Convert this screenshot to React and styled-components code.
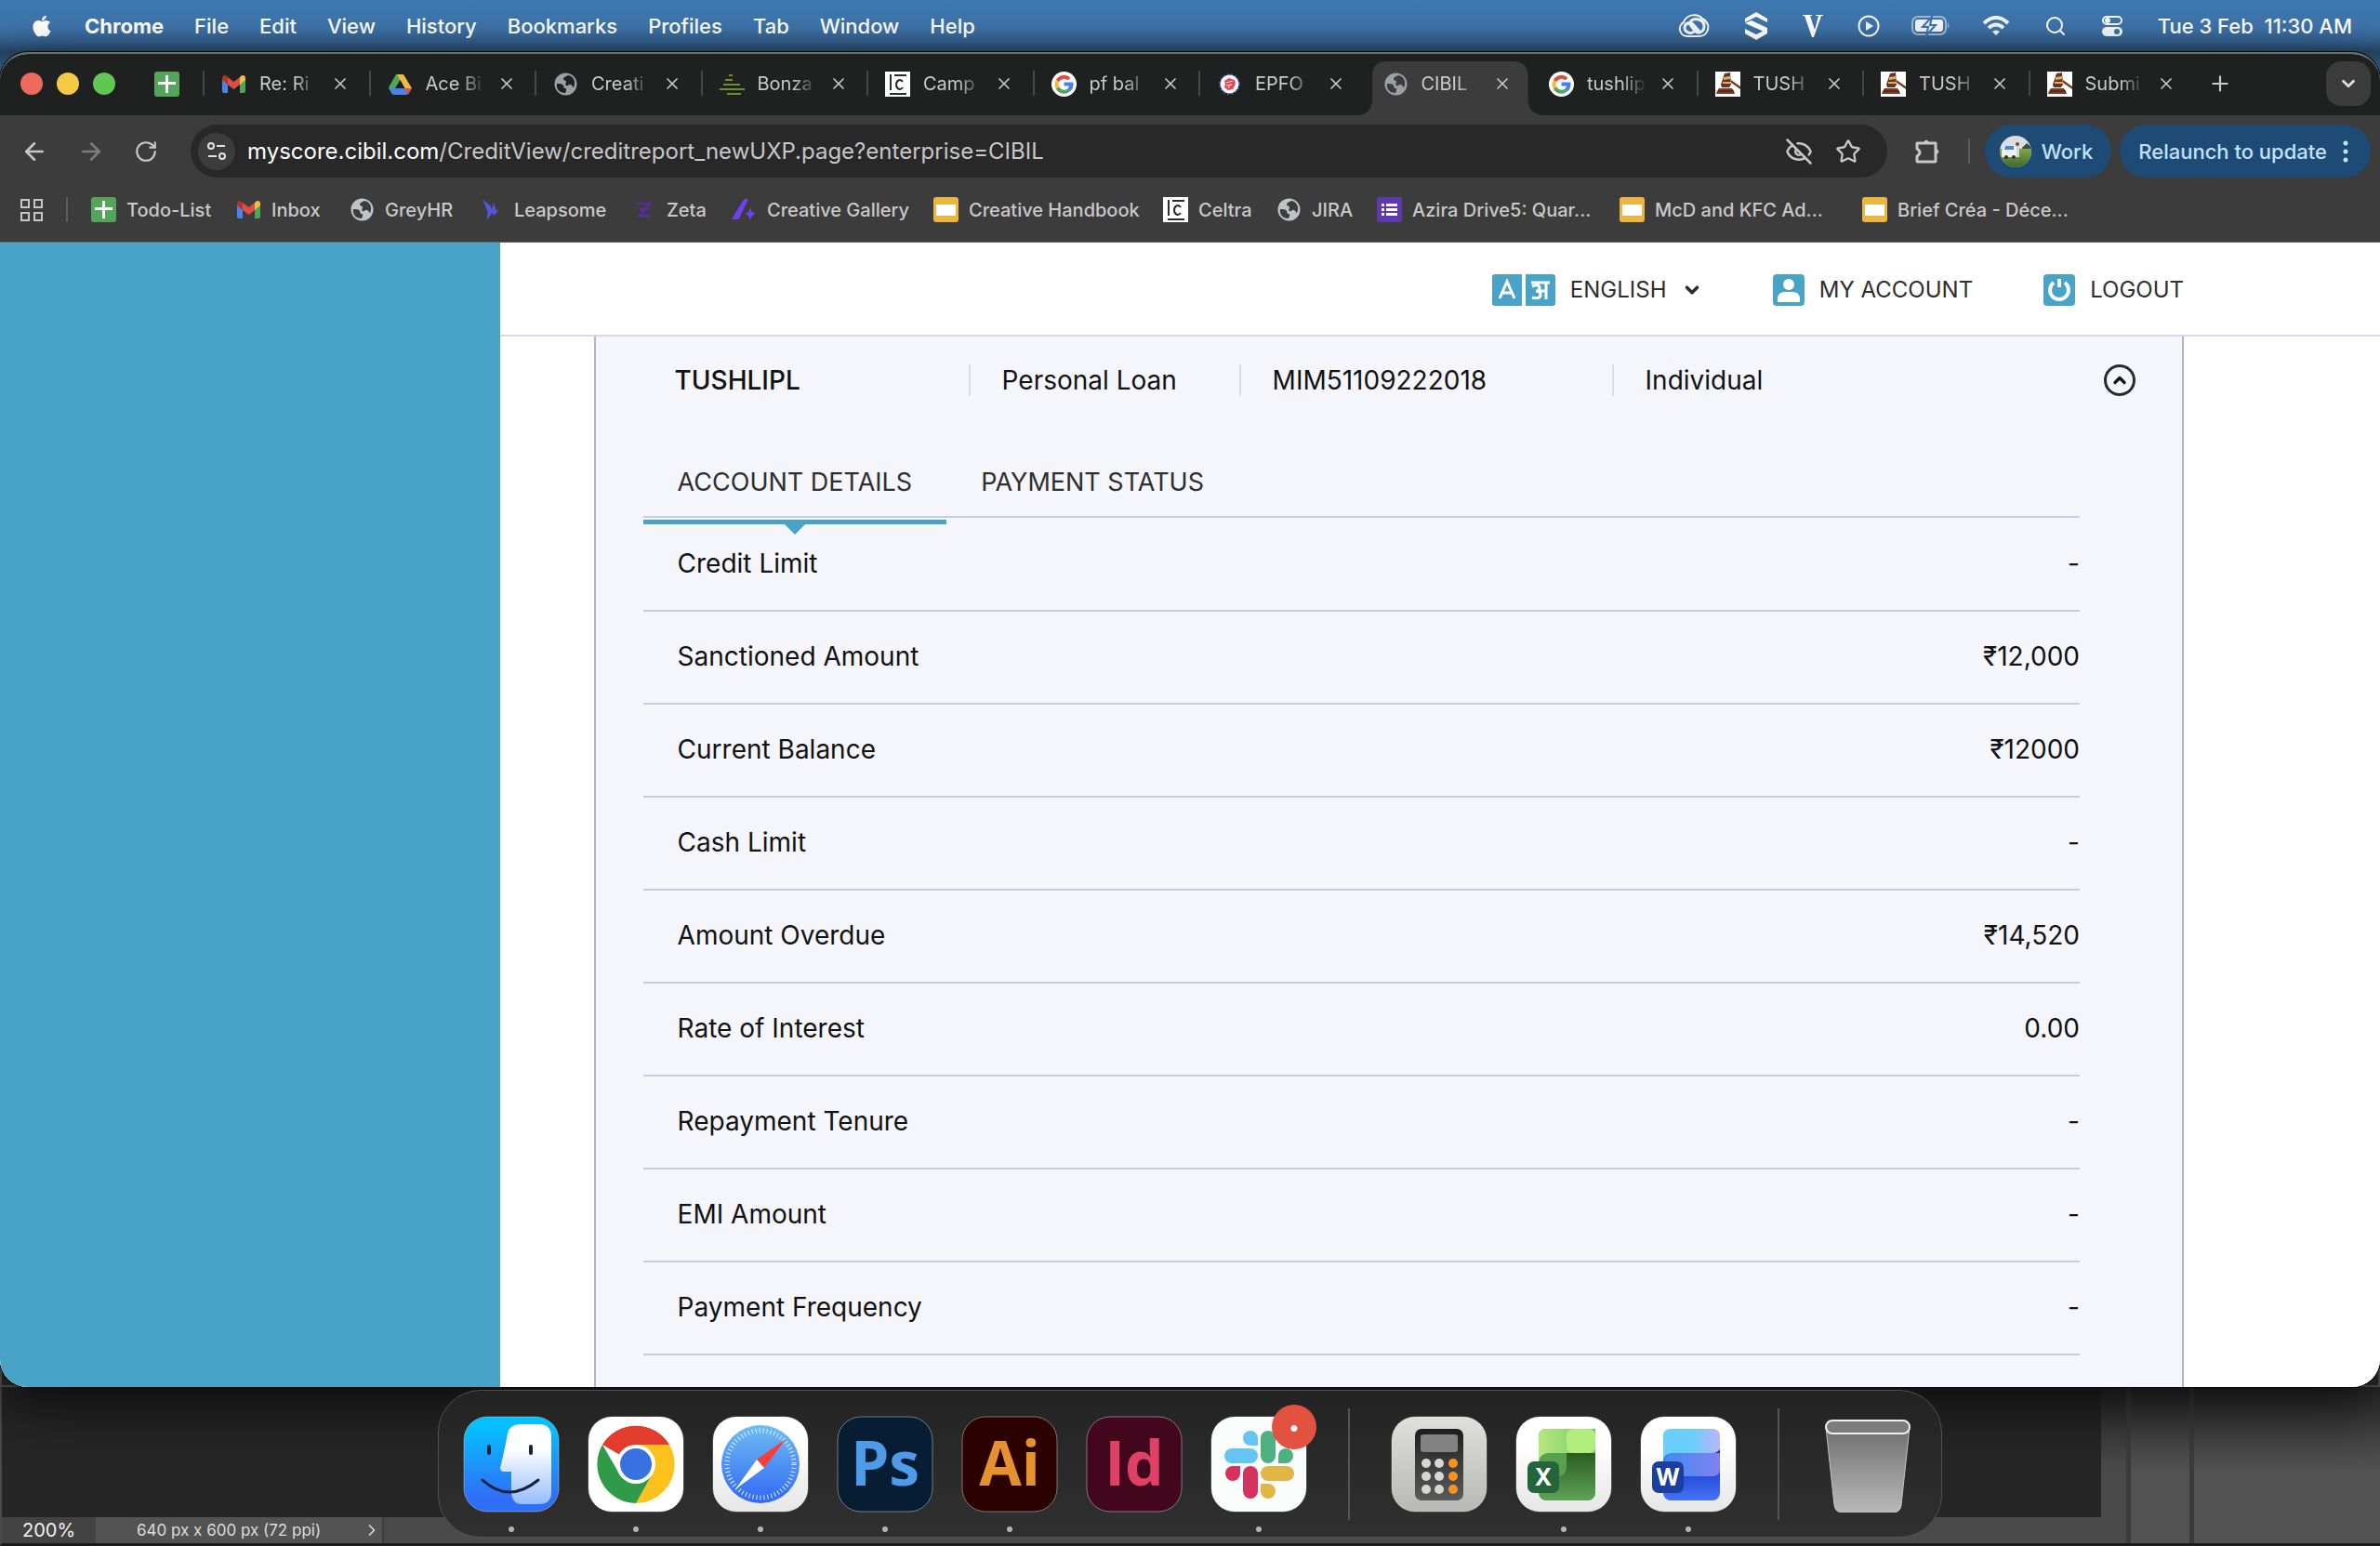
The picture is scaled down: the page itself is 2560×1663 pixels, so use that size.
import React from 'react'
import styled, { createGlobalStyle, css } from 'styled-components'
import { FaApple } from 'react-icons/fa'
import {
  ArrowLeft, ArrowRight, RotateCw, EyeOff, Star, Plus, X, ChevronDown, ChevronRight, ChevronUp, Search
} from 'lucide-react'

const GlobalStyle = createGlobalStyle`
* { box-sizing: border-box; }
body {
  margin: 0;
  background: #262626;
  font-family: Inter, "Noto Sans", sans-serif;
}
button, select {
  margin: 0;
  padding: 0;
  border: 0;
  background: none;
  color: inherit;
  font: inherit;
}
a { color: inherit; text-decoration: none; }
svg { display: block; flex: none; }
`

const Desktop = styled.div`
position: relative;
display: flex;
flex-direction: column;
min-height: 100vh;
overflow: hidden;
background: linear-gradient(#3f79b1 0, #3d73a9 30px, #33608c 44px, #264766 56px, #3b6c9c 80px);
`

/* menu bar */
const MenuBar = styled.header`
display: flex;
align-items: center;
justify-content: space-between;
height: 56px;
padding: 0 30px 0 32px;
color: #fff;
font-size: 22px;
font-weight: 500;
`
const MenuGroup = styled.nav`
display: flex;
align-items: center;
gap: 33px;
`
const MenuItem = styled.button`
font-weight: ${p => (p.$bold ? 700 : 500)};
`
const StatusGroup = styled.div`
display: flex;
align-items: center;
gap: 37px;
`
const Clock = styled.time`
white-space: pre;
`

/* browser window */
const WindowStack = styled.div`
position: relative;
&::before {
  content: "";
  position: absolute;
  inset: 6px 0 0;
  border: 2px solid #5a5a5a;
  border-radius: 26px 26px 0 0;
  background: #2c2c2c;
}
`
const BrowserWindow = styled.main`
position: relative;
overflow: hidden;
border-top: 2px solid #6c7070;
border-radius: 30px;
background: #fff;
box-shadow: 0 0 0 1px #0a0a0a, 0 20px 60px rgba(0, 0, 0, 0.7);
`
const TabStrip = styled.div`
display: flex;
height: 66px;
background: #1f2120;
`
const StripStart = styled.div`
display: flex;
align-items: center;
width: 218px;
padding: 0 0 2px 22px;
gap: 15px;
`
const Light = styled.button`
width: 24px;
height: 24px;
border-radius: 50%;
background: ${p => p.$color};
`
const PinnedTab = styled.button`
margin-left: 27px;
`
const Tabs = styled.div`
flex: 1;
display: grid;
grid-template-columns: repeat(12, 1fr);
`
const TabItem = styled.div`
position: relative;
display: flex;
align-items: center;
gap: 14px;
padding: 0 0 2px 20px;
color: #c9cbca;
font-size: 20px;

${p => !p.$active && css`
  &::before {
    content: "";
    position: absolute;
    left: 0;
    top: 18px;
    width: 2px;
    height: 27px;
    background: ${p.$noLine ? 'transparent' : '#464847'};
  }
`}
`
const ActiveShape = styled.svg`
position: absolute;
left: -10px;
bottom: 0;
width: calc(100% + 26px);
height: 58px;
`
const TabTitle = styled.span`
position: relative;
width: 66px;
white-space: nowrap;
mask-image: linear-gradient(90deg, #000 38px, transparent 64px);
`
const TabIcon = styled.span`
position: relative;
`
const CloseTab = styled.button`
position: relative;
margin-left: -3px;
`
const StripEnd = styled.div`
display: flex;
align-items: center;
justify-content: space-between;
width: 200px;
padding: 0 10px 2px 15px;
color: #c9cbca;
`
const TabSearch = styled.button`
display: grid;
place-items: center;
width: 48px;
height: 48px;
border-radius: 16px;
background: #3c3c3c;
color: #e0e0e0;
`
const Toolbar = styled.div`
display: flex;
align-items: center;
height: 77px;
padding: 0 10px 0 22px;
background: #3c3c3c;
color: #c7c7c7;
`
const NavButton = styled.button`
width: 30px;
margin-right: 31px;
color: ${p => (p.$off ? '#7c7c7c' : '#c7c7c7')};
`
const Omnibox = styled.div`
flex: 1;
display: flex;
align-items: center;
height: 57px;
padding: 0 28px 0 8px;
border-radius: 29px;
background: #282828;
font-size: 24px;
`
const SiteInfo = styled.button`
display: grid;
place-items: center;
width: 40px;
height: 40px;
margin-right: 13px;
border-radius: 50%;
background: #3c3c3c;
`
const Url = styled.span`
flex: 1;
b {
  font-weight: 400;
  color: #fff;
}
`
const OmniActions = styled.div`
display: flex;
gap: 24px;
`
const Extensions = styled.button`
margin: 0 30px 0 29px;
`
const Divider = styled.span`
width: 2px;
height: 27px;
background: #5d5d5d;
`
const Pill = styled.button`
display: flex;
align-items: center;
gap: ${p => (p.$first ? '11px' : '17px')};
height: 57px;
margin-left: ${p => (p.$first ? '16px' : '9px')};
padding: 0 ${p => (p.$first ? '20px 0 16px' : '24px 0 20px')};
border-radius: 29px;
background: #1e4a76;
color: #c2e2fc;
font-size: 22px;
font-weight: 500;
white-space: nowrap;
`
const BookmarkBar = styled.nav`
display: flex;
align-items: center;
height: 60px;
padding: 0 22px 10px;
border-bottom: 1px solid #6a6a6a;
background: #3c3c3c;
color: #c9c9c9;
font-size: 20px;
font-weight: 500;
`
const BookmarkDivider = styled(Divider)`
margin: 0 25px 0 25px;
`
const Bookmark = styled.a`
flex: none;
display: flex;
align-items: center;
gap: 11px;
width: ${p => p.$width}px;
white-space: nowrap;
`

/* web page */
const Page = styled.div`
display: grid;
grid-template-columns: 21% 1fr;
background: #fff;
color: #111;
`
const Sidebar = styled.aside`
background: #49a3c7;
`
const SiteHeader = styled.div`
display: flex;
justify-content: flex-end;
align-items: center;
gap: 76px;
height: 101px;
padding: 2px 211px 0 0;
border-bottom: 2px solid #cfdaf2;
color: #2e2e2e;
font-size: 24px;
`
const HeaderAction = styled.button`
display: flex;
align-items: center;
gap: 16px;
`
const Language = styled.label`
display: flex;
align-items: center;
gap: 16px;
select {
  appearance: none;
}
`
const Card = styled.section`
margin: 0 211px 0 101px;
padding: 0 110px 34px 51px;
border: solid #b4b6ba;
border-width: 0 2px;
background: #f5f6fc;
font-size: 28px;
`
const Summary = styled.div`
display: grid;
grid-template-columns: 316px 291px 401px 1fr 34px;
align-items: center;
height: 94px;
margin-right: -60px;
padding-left: 34px;
`
const SummaryCell = styled.span`
${p => p.$strong && css`
  font-weight: 500;
`}
${p => p.$line && css`
  padding-left: 34px;
  border-left: 2px solid #dcdde2;
`}
`
const Collapse = styled.button`
display: grid;
place-items: center;
width: 34px;
height: 34px;
border: 3px solid #2a2a2a;
border-radius: 50%;
`
const DetailTabs = styled.div`
display: flex;
height: 101px;
padding-top: 26px;
border-bottom: 2px solid #c3cee2;
`
const DetailTab = styled.button`
position: relative;
padding: 0 37px;
color: #2e2e2e;
font-size: 27px;

${p => p.$active && css`
  &::before {
    content: "";
    position: absolute;
    left: 0;
    right: 0;
    bottom: -9px;
    height: 5px;
    background: #49a3c7;
  }
  &::after {
    content: "";
    position: absolute;
    left: calc(50% - 12px);
    bottom: -20px;
    border: solid transparent;
    border-width: 12px 12px 0;
    border-top-color: #49a3c7;
  }
`}
`
const Details = styled.table`
width: 100%;
border-collapse: collapse;
`
const DetailRow = styled.tr`
height: 100px;
border-bottom: 2px solid #c3cee2;
`
const Label = styled.th`
padding: 0 0 2px 37px;
font-weight: 400;
text-align: left;
`
const Value = styled.td`
padding: 0 0 2px;
text-align: right;
`

/* editor window left showing at the bottom */
const Editor = styled.footer`
flex: 1;
display: grid;
grid-template-columns: 1fr 32px 68px 200px;
min-height: 171px;
border-left: 2px solid #4a4a4a;
border-bottom: 3px solid #1b1b1b;
background: #262626;
`
const Canvas = styled.div`
display: flex;
align-items: flex-end;
`
const StatusBar = styled.div`
flex: 1;
display: flex;
height: 28px;
background: #4a4a4a;
color: #dcdcdc;
font-size: 17px;
line-height: 29px;
`
const Zoom = styled.span`
width: 101px;
padding-left: 22px;
background: #434343;
color: #f2f2f2;
font-size: 20px;
`
const DocSize = styled.button`
display: flex;
align-items: center;
justify-content: space-between;
width: 310px;
padding: 0 1px 0 44px;
border-right: 2px solid #3e3e3e;
background: #535353;
`
const Gutter = styled.div`
border-right: ${p => (p.$edge ? '5px solid #3b3b3b' : '0')};
background: linear-gradient(#2b2b2b, ${p => p.$color} 90px);
`
const Dock = styled.nav`
position: absolute;
left: 50%;
bottom: 9px;
transform: translateX(-50%);
display: flex;
align-items: center;
gap: 30px;
height: 159px;
padding: 0 26px;
border: 1px solid #505050;
border-radius: 46px;
background: linear-gradient(#232323, #303030);
`
const DockApp = styled.button`
position: relative;
width: 104px;
height: 104px;
&::after {
  content: "";
  position: absolute;
  left: 49px;
  bottom: -21px;
  width: 6px;
  height: 6px;
  border-radius: 50%;
  background: ${p => (p.$running ? '#b4b4b4' : 'transparent')};
}
`
const DockLine = styled.span`
width: 2px;
height: 120px;
margin: 0 14px;
background: #555;
`
const Badge = styled.span`
position: absolute;
right: -10px;
top: -12px;
display: grid;
place-items: center;
width: 48px;
height: 48px;
border-radius: 50%;
background: #e15241;
color: #fff;
font-size: 22px;
`

const SheetIcon = () => (
  <svg width="27" height="27" viewBox="0 0 27 27">
    <rect width="27" height="27" rx="3" fill="#54a45a" />
    <path d="M12 4h3v7h8v3h-8v9h-3v-9H4v-3h8z" fill="#fff" />
  </svg>
)
const GmailIcon = () => (
  <svg width="27" height="27" viewBox="0 0 27 27">
    <path d="M1 7v14q0 2 2 2h4V11z" fill="#4b83ee" />
    <path d="M26 7v14q0 2-2 2h-4V11z" fill="#4aa65a" />
    <path d="M20 6v8l6-5V7c0-3-3-4-5-2z" fill="#f2bd42" />
    <path d="M1 7v2l6 5V6L6 5C4 3 1 4 1 7z" fill="#b5332a" />
    <path d="M7 6v8l6.5 5 6.5-5V6l-6.5 5z" fill="#dd4f43" />
  </svg>
)
const DriveIcon = () => (
  <svg width="27" height="27" viewBox="0 0 27 27">
    <path d="M9 3h5l-1 7-8 13-4-6z" fill="#4ea65a" />
    <path d="M10 3h7l9 15h-8z" fill="#f1b93e" />
    <path d="M1 18h25l-3 5q-1 2-3 2H7q-2 0-3-2z" fill="#4c82ea" />
    <path d="M18 18h8l-4 6z" fill="#dd5144" />
    <path d="M13.5 9l5 9h-10z" fill="#1f2120" />
  </svg>
)
const GlobeIcon = ({ color = '#bfc3c8', hole = '#3c3c3c' }) => (
  <svg width="27" height="27" viewBox="0 0 27 27">
    <circle cx="13.5" cy="13.5" r="12" fill={color} />
    <path d="M4 13c3 0 6 0 7 2s0 3 2 3 1 3 0 5C7 23 3 19 4 13zM16 4c-2 1-5 2-5 4s3 1 3 3-2 3 0 4 3-2 5-1 2 3 3 3c3-6 0-12-6-13z" fill={hole} />
  </svg>
)
const BonzaIcon = () => (
  <svg width="27" height="27" viewBox="0 0 27 27" fill="#6b8f2a">
    <rect x="10" y="3" width="4" height="2" /><rect x="6" y="8" width="8" height="2" />
    <rect x="4" y="13" width="18" height="2" /><rect x="0" y="18" width="27" height="2" />
    <rect x="8" y="23" width="15" height="2" />
  </svg>
)
const CeltraIcon = () => (
  <svg width="27" height="27" viewBox="0 0 27 27" fill="none" stroke="#2b2b2b" strokeWidth="2">
    <rect width="27" height="27" fill="#fff" stroke="none" />
    <path d="M6 3v17M10 4h13M5 24h18M19 11c-3-4-7-1-7 3s4 7 7 3" />
  </svg>
)
const GoogleIcon = () => (
  <svg width="27" height="27" viewBox="0 0 27 27" fill="none" strokeWidth="4">
    <circle cx="13.5" cy="13.5" r="13.5" fill="#fff" />
    <path d="M6.5 10a8 8 0 0 1 12.5-2" stroke="#e24a3c" />
    <path d="M6.5 10a8 8 0 0 0 0 7.5" stroke="#f2bb3f" />
    <path d="M6.5 17.500a8 8 0 0 0 12 2.500" stroke="#4fa65b" />
    <path d="M13.5 13.5h8a8 8 0 0 1-3 6.500" stroke="#4680ea" />
  </svg>
)
const EpfoIcon = () => (
  <svg width="27" height="27" viewBox="0 0 27 27">
    <circle cx="13.5" cy="13.5" r="10" fill="none" stroke="#3b4fae" strokeWidth="3" strokeDasharray="2 2" />
    <circle cx="13.5" cy="13.5" r="10" fill="#f4f4fb" />
    <path d="M8 10l5-3 6 2 1 4-3 6-5 1-4-3 1-4z" fill="#dc4a50" />
    <path d="M10 12l7-2M10 15l6-1M12 18l3-5" fill="none" stroke="#f8d9da" />
  </svg>
)
const GavelIcon = () => (
  <svg width="27" height="27" viewBox="0 0 27 27">
    <rect width="27" height="27" fill="#fff" />
    <path d="M10 2l6-1 1 13-2 3H7l-1-3z" fill="#6a3420" />
    <path d="M9 6l7-1v3l-7 1zM8 11h9v2H8z" fill="#d5b169" />
    <path d="M17 9l10 7v3l-10-7z" fill="#7a3b22" />
    <path d="M4 18h14l2 3 1 3H1l1-3z" fill="#7d3c22" />
    <path d="M3 21h17" stroke="#3c1a0e" strokeWidth="1" />
  </svg>
)
const LeapsomeIcon = () => (
  <svg width="27" height="27" viewBox="0 0 27 27">
    <path d="M4 2l9 8 2 6-2 3-5 6 2-8zM14 14l2-8 3 9 3-1-6 6z" fill="#5356d6" />
  </svg>
)
const ZetaIcon = () => (
  <svg width="27" height="27" viewBox="0 0 27 27">
    <path d="M6 7h14L9 20h12M9 13.5h9" fill="none" stroke="#55308f" strokeWidth="3" />
  </svg>
)
const GalleryIcon = () => (
  <svg width="27" height="27" viewBox="0 0 27 27" fill="#7140f5">
    <path d="M12 4q1-2 3-2h3l-9 19q-1 3-4 3H0zM20 11q1 6 6 7-5 1-6 7-1-6-6-7 5-1 6-7z" />
  </svg>
)
const SlidesIcon = () => (
  <svg width="27" height="27" viewBox="0 0 27 27">
    <rect width="27" height="27" rx="3" fill="#ebb540" />
    <rect x="3" y="8" width="21" height="12" fill="#fff" />
  </svg>
)
const FormsIcon = () => (
  <svg width="27" height="27" viewBox="0 0 27 27">
    <rect width="27" height="27" rx="2" fill="#5f38b0" />
    <path d="M5 7h3v3H5zM10 7h12v3H10zM5 12h3v3H5zM10 12h12v3H10zM5 17h3v3H5zM10 17h12v3H10z" fill="#fff" />
  </svg>
)

const CloudIcon = () => (
  <svg width="34" height="26" viewBox="0 0 34 26" fill="none" stroke="#f3f6fa" strokeWidth="3">
    <path d="M10 24a8 8 0 0 1-4-15C9 0 21-1 26 5c6 3 8 9 5 14q-2 5-9 5z" strokeWidth="2" />
    <path d="M17 19c-3 3-10 1-10-4s6-7 9-4l7 8M13 8c5-5 15-2 15 5s-7 9-10 5l-6-8" />
  </svg>
)
const StackIcon = () => (
  <svg width="26" height="30" viewBox="0 0 26 30" fill="#fff">
    <path d="M1 11V7l12-7 12 7v4L13 5z" />
    <path d="M1 12l7-3 17 8v6l-6-3z" />
    <path d="M1 18l12 6 12-6v5l-12 7-12-7z" />
  </svg>
)
const VIcon = () => (
  <svg width="22" height="24" viewBox="0 0 22 24" fill="#fff">
    <path d="M0 0h10v1H8l5 15 4-15h-3V0h8v1h-2l-8 23h-2L2 1H0z" />
  </svg>
)
const PlayIcon = () => (
  <svg width="24" height="24" viewBox="0 0 24 24">
    <circle cx="12" cy="12" r="10.5" fill="none" stroke="#f3f6fa" strokeWidth="2" />
    <path d="M9 7l8 5-8 5z" fill="#f3f6fa" />
  </svg>
)
const BatteryIcon = () => (
  <svg width="36" height="22" viewBox="3 0 36 22" overflow="visible">
    <rect x="1" y="1" width="36" height="19" rx="6" fill="none" stroke="#9fbbd6" strokeWidth="2" />
    <rect x="4" y="4" width="30" height="13" rx="3" fill="#f3f6fa" />
    <path d="M39 7q3 3 0 7z" fill="#9fbbd6" />
    <path d="M22 1l-10 11h6l-2 9 10-11h-6z" fill="#f3f6fa" stroke="#3d73a9" strokeWidth="2" />
  </svg>
)
const WifiIcon = () => (
  <svg width="30" height="22" viewBox="0 0 30 22" fill="none" stroke="#f3f6fa" strokeWidth="4">
    <path d="M2 8q13-12 26 0M7 13q8-7 16 0" />
    <path d="M15 21l-4-4q4-3 8 0z" fill="#f3f6fa" stroke="none" />
  </svg>
)
const ControlIcon = () => (
  <svg width="24" height="24" viewBox="0 0 24 24">
    <rect x="2" y="2" width="20" height="8" rx="4" fill="none" stroke="#f3f6fa" strokeWidth="2" />
    <circle cx="7" cy="6" r="3" fill="#f3f6fa" />
    <rect x="1" y="13" width="22" height="10" rx="5" fill="#f3f6fa" />
    <circle cx="17" cy="18" r="3" fill="#3d6f9f" />
  </svg>
)
const TuneIcon = () => (
  <svg width="22" height="22" viewBox="0 0 22 22" fill="none" stroke="#e3e3e3" strokeWidth="2">
    <circle cx="5" cy="5" r="3" /><path d="M11 5h9M2 16h9" /><circle cx="17" cy="16" r="3" />
  </svg>
)
const PuzzleIcon = () => (
  <svg width="28" height="28" viewBox="0 0 28 28" fill="none" stroke="#c7c7c7" strokeWidth="3">
    <path d="M3 5h20v19q0 1-1 1H4q-1 0-1-1v-5q6-4 0-8z" strokeLinejoin="round" />
    <path d="M10 4q3-5 6 0zM24 11q5 3 0 6z" fill="#c7c7c7" stroke="none" />
  </svg>
)
const AppsIcon = () => (
  <svg width="24" height="24" viewBox="0 0 24 24" fill="none" stroke="#c7c7c7" strokeWidth="2">
    <path d="M1 1h8v8H1zM15 1h8v8h-8zM1 15h8v8H1zM15 15h8v8h-8z" />
  </svg>
)
const Avatar = () => (
  <svg width="34" height="34" viewBox="0 0 34 34">
    <defs>
      <clipPath id="face"><circle cx="17" cy="17" r="17" /></clipPath>
      <linearGradient id="grass" x2="0" y2="1"><stop stopColor="#7fa848" /><stop offset="1" stopColor="#41662a" /></linearGradient>
    </defs>
    <g clipPath="url(#face)">
      <rect width="34" height="34" fill="#d8dee3" />
      <path d="M24 13l5-5 5 4v4H24z" fill="#3f5238" />
      <rect y="14" width="34" height="20" fill="url(#grass)" />
      <path d="M4 11h13l4 4v8H2v-7z" fill="#edf1f4" />
      <path d="M6 11h9v4H5z" fill="#4289cf" />
      <circle cx="7" cy="23" r="2" fill="#333" /><circle cx="15" cy="23" r="2" fill="#333" />
      <path d="M18 10h3v13h-3z" fill="#d9d4d0" />
      <circle cx="19" cy="9" r="2" fill="#6b4a3a" />
    </g>
  </svg>
)
const MoreIcon = () => (
  <svg width="6" height="24" viewBox="0 0 6 24" fill="#c2e2fc">
    <circle cx="3" cy="3" r="2.5" /><circle cx="3" cy="12" r="2.5" /><circle cx="3" cy="21" r="2.5" />
  </svg>
)
const LanguageIcon = () => (
  <svg width="68" height="34" viewBox="0 0 68 34">
    <path d="M3 0h29v34H3q-3 0-3-3V3q0-3 3-3zM36 0h29q3 0 3 3v28q0 3-3 3H36z" fill="#49a3c7" />
    <path d="M8 26l8-18 8 18M11 20h10M42 9h20M58 9v18M43 13q8-3 8 2 0 3-4 3 5 0 5 4 0 5-9 3M52 18h6" fill="none" stroke="#fff" strokeWidth="3" />
  </svg>
)
const UserIcon = () => (
  <svg width="34" height="34" viewBox="0 0 34 34">
    <rect width="34" height="34" rx="4" fill="#49a3c7" />
    <circle cx="17" cy="11" r="6" fill="#fff" />
    <path d="M5 30v-3q0-8 8-8h8q8 0 8 8v3z" fill="#fff" />
  </svg>
)
const PowerIcon = () => (
  <svg width="34" height="34" viewBox="0 0 34 34">
    <rect width="34" height="34" rx="4" fill="#49a3c7" />
    <path d="M11 9a10 10 0 1 0 12 0M17 5v9" fill="none" stroke="#fff" strokeWidth="4" />
  </svg>
)

const Tile = ({ fill, children, rim = '#ffffff55' }) => (
  <svg width="104" height="104" viewBox="0 0 104 104">
    <defs>
      <linearGradient id="finder" x2="0" y2="1"><stop offset="0.1" stopColor="#05c0ff" /><stop offset="0.85" stopColor="#2f6ff6" /></linearGradient>
      <linearGradient id="finderFace" x2="0" y2="1"><stop offset="0.3" stopColor="#fff" /><stop offset="1" stopColor="#94bdfb" /></linearGradient>
      <linearGradient id="white" x2="0" y2="1"><stop offset="0.3" stopColor="#fff" /><stop offset="1" stopColor="#e6e6e6" /></linearGradient>
      <linearGradient id="compass" x2="0" y2="1"><stop stopColor="#6fbdf2" /><stop offset="1" stopColor="#3168f3" /></linearGradient>
      <linearGradient id="calc" x2="0" y2="1"><stop stopColor="#dfdfdd" /><stop offset="1" stopColor="#b8b8b4" /></linearGradient>
      <linearGradient id="calcBody" x2="0" y2="1"><stop stopColor="#1e1e1e" /><stop offset="1" stopColor="#5a5a5a" /></linearGradient>
      <linearGradient id="xlDark" x2="0" y2="1"><stop offset="0.3" stopColor="#28591f" /><stop offset="1" stopColor="#5fa257" /></linearGradient>
      <linearGradient id="xlLight"><stop stopColor="#b5e77c" /><stop offset="1" stopColor="#72c968" /></linearGradient>
      <linearGradient id="wdTop"><stop offset="0.5" stopColor="#69cefb" /><stop offset="1" stopColor="#bdb4fa" /></linearGradient>
      <linearGradient id="wdMid"><stop stopColor="#3f8cf0" /><stop offset="1" stopColor="#8080f0" /></linearGradient>
      <linearGradient id="wdLow" x2="0" y2="1"><stop offset="0.2" stopColor="#0b2fc6" /><stop offset="1" stopColor="#4573f6" /></linearGradient>
    </defs>
    <rect x="1" y="1" width="102" height="102" rx="25" fill={fill} stroke={rim} strokeWidth="1" />
    {children}
  </svg>
)
const FinderApp = () => (
  <Tile fill="url(#finder)">
    <path d="M62 9h20q13 0 13 14v59q0 13-13 13H63q-10 0-11-13V60h-8q-4 0-4-4 5-20 8-37 2-10 14-10z" fill="url(#finderFace)" />
    <path d="M28 33v7M73 33v7" stroke="#17233c" strokeWidth="4" strokeLinecap="round" />
    <path d="M21 69q28 26 60 0" fill="none" stroke="#17233c" strokeWidth="3" strokeLinecap="round" />
  </Tile>
)
const ChromeApp = () => (
  <Tile fill="#fff">
    <path d="M52 52L16 31A42 42 0 0 1 88 31z" fill="#e33b2e" />
    <path d="M52 31h36A42 42 0 0 1 52 94l18-32z" fill="#fcc21b" />
    <path d="M16 31l18 31 18 11 18-11-18 32A42 42 0 0 1 16 31z" fill="#2f9a48" />
    <circle cx="52" cy="52" r="21" fill="#fff" />
    <circle cx="52" cy="52" r="17" fill="#3871e0" />
  </Tile>
)
const SafariApp = () => (
  <Tile fill="url(#white)">
    <circle cx="52" cy="52" r="42" fill="url(#compass)" />
    <circle cx="52" cy="52" r="36" fill="none" stroke="#e4f1ff" strokeWidth="5" strokeDasharray="1 3" />
    <path d="M79 25L48 47l8 9z" fill="#fb3d3a" />
    <path d="M25 79l23-32 8 9z" fill="#fff" />
  </Tile>
)
const AdobeText = styled.text`
font-family: "Open Sans", "Noto Sans", sans-serif;
font-size: 66px;
font-weight: 700;
text-anchor: middle;
`
const AdobeApp = ({ name, fill, color }) => (
  <Tile fill={fill} rim="#ffffff66">
    <AdobeText x="52" y="75" fill={color}>{name}</AdobeText>
  </Tile>
)
const SlackApp = () => (
  <Tile fill="#fbfdfc">
    <g fill="#65c5f0"><path d="M35 24a8 8 0 0 1 16 0v8h-8a8 8 0 0 1-8-8z" /><rect x="15" y="35" width="36" height="16" rx="8" /></g>
    <g fill="#4fb081"><rect x="54" y="16" width="16" height="35" rx="8" /><path d="M73 51v-8a8 8 0 1 1 8 8z" /></g>
    <g fill="#e2b645"><rect x="54" y="54" width="36" height="16" rx="8" /><path d="M54 73h8a8 8 0 1 1-8 8z" /></g>
    <g fill="#d5325f"><path d="M32 54v8a8 8 0 1 1-8-8z" /><rect x="35" y="54" width="16" height="35" rx="8" /></g>
  </Tile>
)
const CalculatorApp = () => (
  <Tile fill="url(#calc)">
    <rect x="26" y="14" width="52" height="77" rx="7" fill="url(#calcBody)" />
    <rect x="32" y="20" width="40" height="19" rx="3" fill="#828282" />
    {[51, 65, 79].map(y => (
      <g key={y}>
        <circle cx="38" cy={y} r="5" fill="#d6d6d4" />
        <circle cx="52" cy={y} r="5" fill="#d6d6d4" />
        <circle cx="67" cy={y} r="5" fill="#f7931e" />
      </g>
    ))}
  </Tile>
)
const OfficeText = styled.text`
font-size: 25px;
font-weight: 700;
text-anchor: middle;
`
const ExcelApp = () => (
  <Tile fill="url(#white)">
    <rect x="25" y="14" width="61" height="77" rx="8" fill="url(#xlDark)" />
    <path d="M33 14h53v26H44q-8 0-8 10H25V22q0-8 8-8z" fill="url(#xlLight)" />
    <rect x="55" y="14" width="31" height="26" rx="7" fill="#b2ee7e" />
    <path d="M25 52q0-12 12-12h18v15q0 10-10 10H25z" fill="#57a04f" />
    <rect x="13" y="49" width="34" height="34" rx="7" fill="#25653c" />
    <OfficeText x="30" y="75" fill="#fff">X</OfficeText>
  </Tile>
)
const WordApp = () => (
  <Tile fill="url(#white)">
    <rect x="25" y="30" width="61" height="61" rx="8" fill="url(#wdLow)" />
    <path d="M25 52q0-12 12-12h49v17q0 8-8 8H25z" fill="url(#wdMid)" />
    <path d="M33 14h45q8 0 8 8v11q0 7-8 7H37q-12 0-12 10V22q0-8 8-8z" fill="url(#wdTop)" />
    <rect x="13" y="49" width="34" height="34" rx="7" fill="#1b3f9e" />
    <OfficeText x="30" y="75" fill="#fff">W</OfficeText>
  </Tile>
)
const TrashApp = () => (
  <svg width="104" height="104" viewBox="0 0 104 104">
    <defs>
      <linearGradient id="bin" x2="0" y2="1"><stop stopColor="#6e6e6e" /><stop offset="1" stopColor="#b9b9b9" /></linearGradient>
    </defs>
    <path d="M6 12l9 84q1 8 9 8h54q8 0 9-8l9-84z" fill="url(#bin)" stroke="#c4c4c4" />
    <rect x="6" y="5" width="90" height="14" rx="7" fill="#7d7d7d" stroke="#efefef" strokeWidth="2" />
  </svg>
)

const menus = ['File', 'Edit', 'View', 'History', 'Bookmarks', 'Profiles', 'Tab', 'Window', 'Help']

const tabs = [
  { title: 'Re: Ri', icon: <GmailIcon /> },
  { title: 'Ace Bi', icon: <DriveIcon /> },
  { title: 'Creati', icon: <GlobeIcon color="#9aa0a6" hole="#1f2120" /> },
  { title: 'Bonza', icon: <BonzaIcon /> },
  { title: 'Camp', icon: <CeltraIcon /> },
  { title: 'pf bal', icon: <GoogleIcon /> },
  { title: 'EPFO', icon: <EpfoIcon /> },
  { title: 'CIBIL', icon: <GlobeIcon color="#9aa0a6" />, active: true },
  { title: 'tushlip', icon: <GoogleIcon />, noLine: true },
  { title: 'TUSH', icon: <GavelIcon /> },
  { title: 'TUSH', icon: <GavelIcon /> },
  { title: 'Submi', icon: <GavelIcon /> }
]

const bookmarks = [
  { title: 'Todo-List', icon: <SheetIcon />, width: 156 },
  { title: 'Inbox', icon: <GmailIcon />, width: 122 },
  { title: 'GreyHR', icon: <GlobeIcon />, width: 139 },
  { title: 'Leapsome', icon: <LeapsomeIcon />, width: 164 },
  { title: 'Zeta', icon: <ZetaIcon />, width: 108 },
  { title: 'Creative Gallery', icon: <GalleryIcon />, width: 217 },
  { title: 'Creative Handbook', icon: <SlidesIcon />, width: 247 },
  { title: 'Celtra', icon: <CeltraIcon />, width: 122 },
  { title: 'JIRA', icon: <GlobeIcon />, width: 108 },
  { title: 'Azira Drive5: Quar...', icon: <FormsIcon />, width: 261 },
  { title: 'McD and KFC Ad...', icon: <SlidesIcon />, width: 261 },
  { title: 'Brief Créa - Déce...', icon: <SlidesIcon />, width: 261 }
]

const details = [
  ['Credit Limit', '-'],
  ['Sanctioned Amount', '₹12,000'],
  ['Current Balance', '₹12000'],
  ['Cash Limit', '-'],
  ['Amount Overdue', '₹14,520'],
  ['Rate of Interest', '0.00'],
  ['Repayment Tenure', '-'],
  ['EMI Amount', '-'],
  ['Payment Frequency', '-']
]

const apps = [
  { name: 'Finder', icon: <FinderApp />, running: true },
  { name: 'Chrome', icon: <ChromeApp />, running: true },
  { name: 'Safari', icon: <SafariApp />, running: true },
  { name: 'Photoshop', icon: <AdobeApp name="Ps" fill="#061d33" color="#4f9bea" />, running: true },
  { name: 'Illustrator', icon: <AdobeApp name="Ai" fill="#2b0200" color="#e5912f" />, running: true },
  { name: 'InDesign', icon: <AdobeApp name="Id" fill="#42071d" color="#de4066" /> },
  { name: 'Slack', icon: <SlackApp />, running: true, badge: true }
]
const moreApps = [
  { name: 'Calculator', icon: <CalculatorApp /> },
  { name: 'Excel', icon: <ExcelApp />, running: true },
  { name: 'Word', icon: <WordApp />, running: true }
]

const DockItem = ({ app }) => (
  <DockApp aria-label={app.name} $running={app.running}>
    {app.icon}
    {app.badge && <Badge>•</Badge>}
  </DockApp>
)

const App = () => (
  <Desktop>
    <GlobalStyle />
    <MenuBar>
      <MenuGroup>
        <FaApple size={26} />
        <MenuItem $bold>Chrome</MenuItem>
        {menus.map(menu => <MenuItem key={menu}>{menu}</MenuItem>)}
      </MenuGroup>
      <StatusGroup>
        <CloudIcon />
        <StackIcon />
        <VIcon />
        <PlayIcon />
        <BatteryIcon />
        <WifiIcon />
        <Search size={24} />
        <ControlIcon />
        <Clock>Tue 3 Feb  11:30 AM</Clock>
      </StatusGroup>
    </MenuBar>

    <WindowStack>
      <BrowserWindow>
        <TabStrip>
          <StripStart>
            <Light aria-label="Close" $color="#ee6a5f" />
            <Light aria-label="Minimize" $color="#f5c945" />
            <Light aria-label="Zoom" $color="#62c655" />
            <PinnedTab aria-label="Sheet"><SheetIcon /></PinnedTab>
          </StripStart>
          <Tabs>
            {tabs.map((tab, i) => (
              <TabItem key={i} $active={tab.active} $noLine={tab.noLine}>
                {tab.active && (
                  <ActiveShape viewBox="0 0 204 58" preserveAspectRatio="none">
                    <path d="M0 58q18 0 18-18V16Q18 0 34 0h135q16 0 16 16v24q0 18 19 18z" fill="#3c3c3c" />
                  </ActiveShape>
                )}
                <TabIcon>{tab.icon}</TabIcon>
                <TabTitle>{tab.title}</TabTitle>
                <CloseTab aria-label="Close tab"><X size={20} /></CloseTab>
              </TabItem>
            ))}
          </Tabs>
          <StripEnd>
            <button aria-label="New tab"><Plus size={26} /></button>
            <TabSearch aria-label="Search tabs"><ChevronDown size={22} strokeWidth={3} /></TabSearch>
          </StripEnd>
        </TabStrip>

        <Toolbar>
          <NavButton aria-label="Back"><ArrowLeft size={30} /></NavButton>
          <NavButton aria-label="Forward" $off><ArrowRight size={30} /></NavButton>
          <NavButton aria-label="Reload"><RotateCw size={26} /></NavButton>
          <Omnibox>
            <SiteInfo aria-label="Site information"><TuneIcon /></SiteInfo>
            <Url><b>myscore.cibil.com</b>/CreditView/creditreport_newUXP.page?enterprise=CIBIL</Url>
            <OmniActions>
              <button aria-label="Tracking"><EyeOff size={30} /></button>
              <button aria-label="Bookmark"><Star size={28} /></button>
            </OmniActions>
          </Omnibox>
          <Extensions aria-label="Extensions"><PuzzleIcon /></Extensions>
          <Divider />
          <Pill $first><Avatar />Work</Pill>
          <Pill>Relaunch to update<MoreIcon /></Pill>
        </Toolbar>

        <BookmarkBar>
          <AppsIcon />
          <BookmarkDivider />
          {bookmarks.map(b => (
            <Bookmark key={b.title} href="#" $width={b.width}>{b.icon}{b.title}</Bookmark>
          ))}
        </BookmarkBar>

        <Page>
          <Sidebar />
          <div>
            <SiteHeader>
              <Language>
                <LanguageIcon />
                <select aria-label="Language"><option>ENGLISH</option></select>
                <ChevronDown size={22} strokeWidth={4} />
              </Language>
              <HeaderAction><UserIcon />MY ACCOUNT</HeaderAction>
              <HeaderAction><PowerIcon />LOGOUT</HeaderAction>
            </SiteHeader>
            <Card>
              <Summary>
                <SummaryCell $strong>TUSHLIPL</SummaryCell>
                <SummaryCell $line>Personal Loan</SummaryCell>
                <SummaryCell $line>MIM51109222018</SummaryCell>
                <SummaryCell $line>Individual</SummaryCell>
                <Collapse aria-label="Collapse"><ChevronUp size={20} strokeWidth={4} /></Collapse>
              </Summary>
              <DetailTabs>
                <DetailTab $active>ACCOUNT DETAILS</DetailTab>
                <DetailTab>PAYMENT STATUS</DetailTab>
              </DetailTabs>
              <Details>
                <tbody>
                  {details.map(([label, value]) => (
                    <DetailRow key={label}>
                      <Label scope="row">{label}</Label>
                      <Value>{value}</Value>
                    </DetailRow>
                  ))}
                </tbody>
              </Details>
            </Card>
          </div>
        </Page>
      </BrowserWindow>
    </WindowStack>

    <Editor>
      <Canvas>
        <StatusBar>
          <Zoom>200%</Zoom>
          <DocSize>640 px x 600 px (72 ppi)<ChevronRight size={20} /></DocSize>
        </StatusBar>
      </Canvas>
      <Gutter $color="#4a4a4a" $edge />
      <Gutter $color="#525252" $edge />
      <Gutter $color="#525252" />
    </Editor>

    <Dock>
      {apps.map(app => <DockItem key={app.name} app={app} />)}
      <DockLine />
      {moreApps.map(app => <DockItem key={app.name} app={app} />)}
      <DockLine />
      <DockApp aria-label="Trash"><TrashApp /></DockApp>
    </Dock>
  </Desktop>
)

export default App
